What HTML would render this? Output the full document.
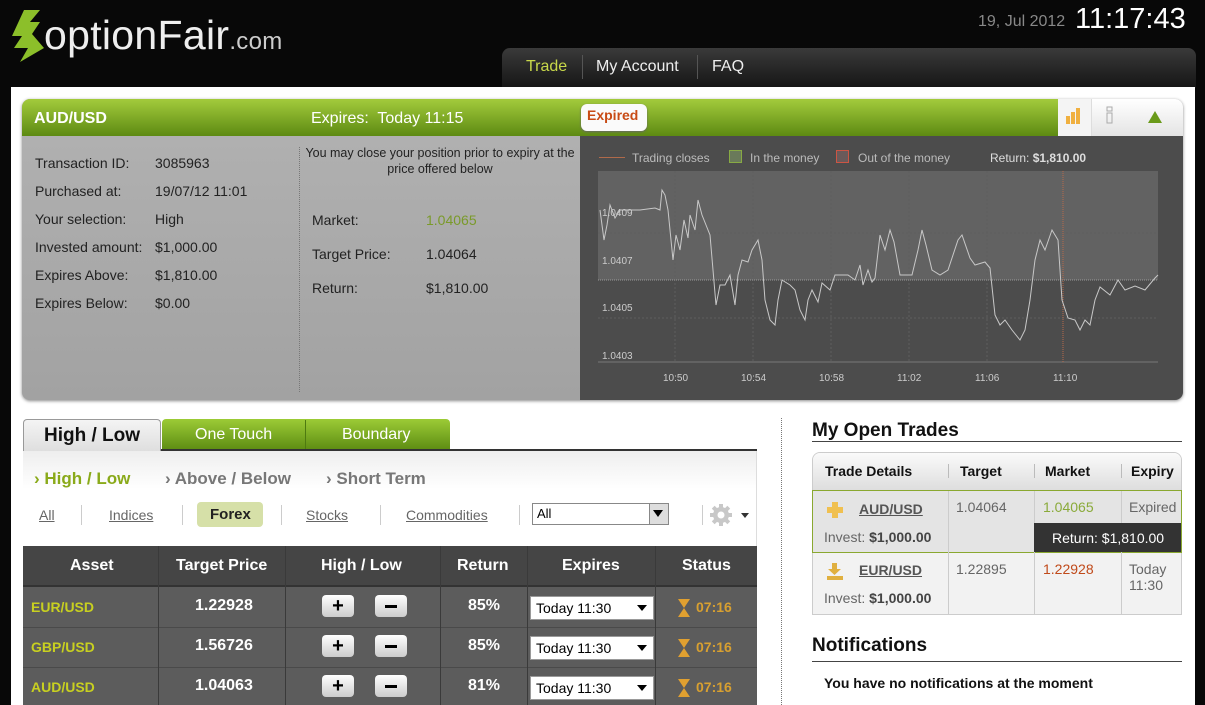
<!DOCTYPE html>
<html><head><meta charset="utf-8"><style>
*{box-sizing:border-box;margin:0;padding:0}
body{width:1205px;height:705px;overflow:hidden;background:#080808;font-family:"Liberation Sans",Arial,sans-serif;position:relative}
.a{position:absolute}
.t{position:absolute;white-space:nowrap}
</style></head><body>
<!-- header -->
<svg class="a" style="left:10px;top:8px" width="36" height="56" viewBox="0 0 36 56"><path d="M14 2 L30 2 L20 14 L30 14 L22 26 L34 40 L10 54 L18 40 L4 40 L12 28 L2 28 Z" fill="#8cbf2a"/></svg>
<div class="t" style="left:44px;top:12px;font-size:41px;color:#eee;letter-spacing:0.3px">optionFair<span style="font-size:24px;color:#ccc">.com</span></div>
<div class="t" style="left:978px;top:13px;font-size:16px;color:#888">19, Jul 2012</div>
<div class="t" style="left:1075px;top:3px;font-size:29px;color:#fff">11:17:43</div>
<div class="a" style="left:502px;top:48px;width:694px;height:40px;border-radius:8px 8px 0 0;background:linear-gradient(#3a3a3a,#151515)"></div>
<div class="t" style="left:526px;top:58px;font-size:16px;color:#c8d84a">Trade</div>
<div class="a" style="left:582px;top:55px;width:1px;height:24px;background:#555"></div>
<div class="t" style="left:596px;top:58px;font-size:16px;color:#eee">My Account</div>
<div class="a" style="left:697px;top:55px;width:1px;height:24px;background:#555"></div>
<div class="t" style="left:712px;top:58px;font-size:16px;color:#eee">FAQ</div>
<!-- content -->
<div class="a" style="left:11px;top:87px;width:1184px;height:618px;background:#fff"></div>
<!-- top panel -->
<div class="a" style="left:22px;top:99px;width:1161px;height:301px;border-radius:8px;background:#aaa;box-shadow:0 1px 3px #888;overflow:hidden">
 <div class="a" style="left:0;top:0;width:1036px;height:37px;background:linear-gradient(#a3cb3c,#5d8a12)"></div>
 <div class="a" style="left:1036px;top:0;width:125px;height:37px;background:linear-gradient(#fff,#e4e4e4)"></div>
 <div class="a" style="left:1036px;top:0;width:34px;height:37px;background:#f4f4f4;border-right:1px solid #ddd"></div>
 <div class="a" style="left:0;top:37px;width:558px;height:264px;background:linear-gradient(#b0b0b0,#a2a2a2)"></div>
 <div class="a" style="left:558px;top:37px;width:603px;height:264px;background:#4c4c4c"></div>
</div>
<div class="t" style="left:34px;top:110px;font-size:16px;font-weight:bold;color:#fff">AUD/USD</div>
<div class="t" style="left:311px;top:110px;font-size:16px;color:#fff">Expires:&nbsp; Today 11:15</div>
<div class="a" style="left:581px;top:104px;width:66px;height:27px;background:#fafafa;border-radius:6px;box-shadow:0 1px 2px #666"></div>
<div class="t" style="left:587px;top:107px;font-size:14px;font-weight:bold;color:#c84a14">Expired</div>
<svg class="a" style="left:1065px;top:106px" width="18" height="20"><rect x="1" y="10" width="4" height="8" fill="#f0b040"/><rect x="6" y="6" width="4" height="12" fill="#f0b040"/><rect x="11" y="2" width="4" height="16" fill="#f0b040"/></svg>
<svg class="a" style="left:1105px;top:106px" width="10" height="20"><rect x="2" y="1" width="5" height="4" fill="none" stroke="#aaa"/><rect x="2" y="7" width="5" height="10" fill="none" stroke="#aaa"/></svg>
<svg class="a" style="left:1148px;top:111px" width="14" height="12"><path d="M7 0 L14 12 L0 12Z" fill="#6a9a1a"/></svg>
<div class="a" style="left:299px;top:147px;height:245px;border-left:1px dotted #777"></div>
<div style="position:absolute;left:35px;top:149px;font-size:14px;color:#222;line-height:28px">
Transaction ID:<br>Purchased at:<br>Your selection:<br>Invested amount:<br>Expires Above:<br>Expires Below:</div>
<div style="position:absolute;left:155px;top:149px;font-size:14px;color:#222;line-height:28px">
3085963<br>19/07/12 11:01<br>High<br>$1,000.00<br>$1,810.00<br>$0.00</div>
<div class="t" style="left:302px;top:145px;width:276px;text-align:center;font-size:12.5px;color:#222;line-height:16px;white-space:normal">You may close your position prior to expiry at the price offered below</div>
<div style="position:absolute;left:312px;top:203px;font-size:14px;color:#222;line-height:34px">Market:<br>Target Price:<br>Return:</div>
<div style="position:absolute;left:426px;top:203px;font-size:14px;color:#222;line-height:34px"><span style="color:#7a9a2a">1.04065</span><br>1.04064<br>$1,810.00</div>
<!-- chart -->
<div class="a" style="left:599px;top:157px;width:26px;height:1px;background:#b06a4a"></div>
<div class="t" style="left:632px;top:151px;font-size:12px;color:#bbb">Trading closes</div>
<div class="a" style="left:729px;top:150px;width:13px;height:13px;background:#6a7a5a;border:1px solid #8a4"></div>
<div class="t" style="left:750px;top:151px;font-size:12px;color:#bbb">In the money</div>
<div class="a" style="left:836px;top:150px;width:13px;height:13px;background:#6a5a5a;border:1px solid #c54"></div>
<div class="t" style="left:858px;top:151px;font-size:12px;color:#bbb">Out of the money</div>
<div class="t" style="left:990px;top:151px;font-size:12px;color:#ddd">Return: <b>$1,810.00</b></div>
<div class="a" style="left:598px;top:171px;width:560px;height:109px;background:#626262"></div>
<svg class="a" style="left:0;top:0" width="1205" height="405">
<g stroke="#5e5e5e" stroke-dasharray="2,2" stroke-width="1"><line x1="675" y1="171" x2="675" y2="362"/><line x1="753" y1="171" x2="753" y2="362"/><line x1="831" y1="171" x2="831" y2="362"/><line x1="909" y1="171" x2="909" y2="362"/><line x1="987" y1="171" x2="987" y2="362"/><line x1="598" y1="233" x2="1158" y2="233"/><line x1="598" y1="318" x2="1158" y2="318"/></g>
<line x1="598" y1="280" x2="1158" y2="280" stroke="#999" stroke-width="1" stroke-dasharray="1,1"/>
<line x1="598" y1="362" x2="1158" y2="362" stroke="#777"/>
<line x1="1063" y1="171" x2="1063" y2="362" stroke="#b86a4a" stroke-dasharray="1,1"/>
<polyline fill="none" stroke="#c8c8c8" stroke-width="1" points="600,210 604,240 607,225 610,205 615,218 620,210 640,210 655,208 660,210 662,190 665,195 668,210 673,260 676,235 680,250 684,220 688,238 690,215 695,230 698,200 702,215 706,225 710,235 716,305 720,285 725,285 730,275 735,305 738,275 742,260 748,262 752,250 758,240 762,260 765,300 770,320 775,325 778,300 782,280 790,285 795,290 800,310 805,320 808,300 812,290 818,302 822,283 830,290 835,275 848,275 855,280 860,265 863,285 868,270 872,282 875,278 880,235 885,250 890,230 894,242 900,275 912,275 918,250 922,230 926,245 932,270 940,275 948,270 958,240 962,235 970,258 975,265 985,262 990,268 995,315 1000,325 1005,320 1012,330 1020,340 1025,330 1030,300 1035,260 1040,240 1045,250 1052,230 1058,240 1062,300 1068,318 1075,320 1080,330 1085,320 1090,325 1095,300 1100,287 1110,295 1118,280 1125,290 1135,286 1145,290 1155,278 1158,275"/>
<g font-size="10" fill="#ccc" font-family="Liberation Sans,sans-serif"><text x="602" y="216">1.0409</text><text x="602" y="264">1.0407</text><text x="602" y="311">1.0405</text><text x="602" y="359">1.0403</text>
<text x="663" y="381">10:50</text><text x="741" y="381">10:54</text><text x="819" y="381">10:58</text><text x="897" y="381">11:02</text><text x="975" y="381">11:06</text><text x="1053" y="381">11:10</text></g>
</svg>
<!-- tabs -->
<div class="a" style="left:23px;top:419px;width:138px;height:34px;background:linear-gradient(#f4f4f4,#ddd);border:1px solid #999;border-bottom:none;border-radius:4px 4px 0 0"></div>
<div class="t" style="left:44px;top:425px;font-size:19px;font-weight:bold;color:#111">High / Low</div>
<div class="a" style="left:162px;top:419px;width:288px;height:31px;background:linear-gradient(#9ccb36,#5d8c12);border-radius:4px 4px 0 0"></div>
<div class="a" style="left:305px;top:420px;width:1px;height:30px;background:#4e7a10"></div>
<div class="t" style="left:195px;top:426px;font-size:16px;color:#fff">One Touch</div>
<div class="t" style="left:342px;top:426px;font-size:16px;color:#fff">Boundary</div>
<div class="a" style="left:161px;top:449px;width:596px;height:2px;background:#333"></div>
<div class="a" style="left:23px;top:451px;width:734px;height:95px;background:linear-gradient(#eee,#fff 40%);border-right:1px solid #ddd"></div>
<div class="t" style="left:34px;top:469px;font-size:17px;font-weight:bold;color:#8aaa1a">› High / Low</div>
<div class="t" style="left:165px;top:469px;font-size:17px;font-weight:bold;color:#777">› Above / Below</div>
<div class="t" style="left:326px;top:469px;font-size:17px;font-weight:bold;color:#777">› Short Term</div>
<div class="t" style="left:39px;top:507px;font-size:14px;color:#666;text-decoration:underline">All</div>
<div class="t" style="left:109px;top:507px;font-size:14px;color:#666;text-decoration:underline">Indices</div>
<div class="a" style="left:197px;top:502px;width:66px;height:25px;background:#d6e0a8;border-radius:4px"></div>
<div class="t" style="left:210px;top:506px;font-size:15px;font-weight:bold;color:#222">Forex</div>
<div class="t" style="left:306px;top:507px;font-size:14px;color:#666;text-decoration:underline">Stocks</div>
<div class="t" style="left:406px;top:507px;font-size:14px;color:#666;text-decoration:underline">Commodities</div>
<div class="a" style="left:81px;top:505px;width:1px;height:20px;background:#ccc"></div>
<div class="a" style="left:182px;top:505px;width:1px;height:20px;background:#ccc"></div>
<div class="a" style="left:281px;top:505px;width:1px;height:20px;background:#ccc"></div>
<div class="a" style="left:380px;top:505px;width:1px;height:20px;background:#ccc"></div>
<div class="a" style="left:519px;top:505px;width:1px;height:20px;background:#ccc"></div>
<div class="a" style="left:702px;top:505px;width:1px;height:20px;background:#ccc"></div>
<div class="a" style="left:532px;top:503px;width:137px;height:22px;border:1px solid #888;background:#fff"></div>
<div class="t" style="left:537px;top:506px;font-size:13px;color:#000">All</div>
<div class="a" style="left:649px;top:504px;width:19px;height:20px;background:#ddd;border-left:1px solid #888"></div>
<svg class="a" style="left:653px;top:510px" width="10" height="8"><path d="M0 0 L10 0 L5 7Z" fill="#000"/></svg>
<svg class="a" style="left:710px;top:503px" width="40" height="24"><g fill="#c8c8c8"><circle cx="11" cy="12" r="8"/><rect x="9" y="1" width="4" height="22"/><rect x="0" y="10" width="22" height="4"/><rect x="9" y="1" width="4" height="22" transform="rotate(45 11 12)"/><rect x="9" y="1" width="4" height="22" transform="rotate(-45 11 12)"/></g><circle cx="11" cy="12" r="3.5" fill="#fff"/><path d="M31 10 L39 10 L35 15Z" fill="#333"/></svg>
<!-- table -->
<div class="a" style="left:23px;top:546px;width:734px;height:159px;background:#5c5c5c"></div>
<div class="a" style="left:23px;top:546px;width:734px;height:41px;background:#454545;border-bottom:2px solid #333"></div>
<div class="a" style="left:23px;top:627px;width:734px;height:1px;background:#4a4a4a"></div>
<div class="a" style="left:23px;top:667px;width:734px;height:1px;background:#4a4a4a"></div>
<div class="a" style="left:158px;top:546px;width:1px;height:159px;background:#3a3a3a"></div>
<div class="a" style="left:285px;top:546px;width:1px;height:159px;background:#3a3a3a"></div>
<div class="a" style="left:440px;top:546px;width:1px;height:159px;background:#3a3a3a"></div>
<div class="a" style="left:527px;top:546px;width:1px;height:159px;background:#3a3a3a"></div>
<div class="a" style="left:655px;top:546px;width:1px;height:159px;background:#3a3a3a"></div>
<div style="position:absolute;left:23px;top:557px;width:734px;font-size:16px;font-weight:bold;color:#fff">
<span class="t" style="left:47px">Asset</span><span class="t" style="left:153px">Target Price</span><span class="t" style="left:298px">High / Low</span><span class="t" style="left:434px">Return</span><span class="t" style="left:539px">Expires</span><span class="t" style="left:659px">Status</span></div>
<!-- rows -->
<div style="position:absolute;left:0;top:587px">
 <div class="t" style="left:31px;top:12px;font-size:14px;font-weight:bold;color:#c8d020">EUR/USD</div>
 <div class="t" style="left:195px;top:10px;font-size:16px;font-weight:bold;color:#fff">1.22928</div>
 <div class="a" style="left:322px;top:8px;width:32px;height:22px;border-radius:4px;background:linear-gradient(#fff,#ccc);font:bold 20px/22px 'Liberation Sans';text-align:center;color:#000">+</div>
 <div class="a" style="left:375px;top:8px;width:32px;height:22px;border-radius:4px;background:linear-gradient(#fff,#ccc)"><div class="a" style="left:10px;top:10px;width:12px;height:3px;background:#000"></div></div>
 <div class="t" style="left:468px;top:10px;font-size:16px;font-weight:bold;color:#fff">85%</div>
 <div class="a" style="left:530px;top:9px;width:124px;height:24px;background:#fff;border:1px solid #999"></div>
 <div class="t" style="left:536px;top:13px;font-size:14px;color:#000">Today 11:30</div>
 <svg class="a" style="left:637px;top:18px" width="10" height="7"><path d="M0 0 L10 0 L5 6Z" fill="#000"/></svg>
 <svg class="a" style="left:677px;top:11px" width="14" height="20"><path d="M1 1 H13 L7 10 L13 19 H1 L7 10Z" fill="#e0a030"/></svg>
 <div class="t" style="left:696px;top:12px;font-size:14px;font-weight:bold;color:#d8a030">07:16</div>
</div>
<div style="position:absolute;left:0;top:627px">
 <div class="t" style="left:31px;top:12px;font-size:14px;font-weight:bold;color:#c8d020">GBP/USD</div>
 <div class="t" style="left:195px;top:10px;font-size:16px;font-weight:bold;color:#fff">1.56726</div>
 <div class="a" style="left:322px;top:8px;width:32px;height:22px;border-radius:4px;background:linear-gradient(#fff,#ccc);font:bold 20px/22px 'Liberation Sans';text-align:center;color:#000">+</div>
 <div class="a" style="left:375px;top:8px;width:32px;height:22px;border-radius:4px;background:linear-gradient(#fff,#ccc)"><div class="a" style="left:10px;top:10px;width:12px;height:3px;background:#000"></div></div>
 <div class="t" style="left:468px;top:10px;font-size:16px;font-weight:bold;color:#fff">85%</div>
 <div class="a" style="left:530px;top:9px;width:124px;height:24px;background:#fff;border:1px solid #999"></div>
 <div class="t" style="left:536px;top:13px;font-size:14px;color:#000">Today 11:30</div>
 <svg class="a" style="left:637px;top:18px" width="10" height="7"><path d="M0 0 L10 0 L5 6Z" fill="#000"/></svg>
 <svg class="a" style="left:677px;top:11px" width="14" height="20"><path d="M1 1 H13 L7 10 L13 19 H1 L7 10Z" fill="#e0a030"/></svg>
 <div class="t" style="left:696px;top:12px;font-size:14px;font-weight:bold;color:#d8a030">07:16</div>
</div>
<div style="position:absolute;left:0;top:667px">
 <div class="t" style="left:31px;top:12px;font-size:14px;font-weight:bold;color:#c8d020">AUD/USD</div>
 <div class="t" style="left:195px;top:10px;font-size:16px;font-weight:bold;color:#fff">1.04063</div>
 <div class="a" style="left:322px;top:8px;width:32px;height:22px;border-radius:4px;background:linear-gradient(#fff,#ccc);font:bold 20px/22px 'Liberation Sans';text-align:center;color:#000">+</div>
 <div class="a" style="left:375px;top:8px;width:32px;height:22px;border-radius:4px;background:linear-gradient(#fff,#ccc)"><div class="a" style="left:10px;top:10px;width:12px;height:3px;background:#000"></div></div>
 <div class="t" style="left:468px;top:10px;font-size:16px;font-weight:bold;color:#fff">81%</div>
 <div class="a" style="left:530px;top:9px;width:124px;height:24px;background:#fff;border:1px solid #999"></div>
 <div class="t" style="left:536px;top:13px;font-size:14px;color:#000">Today 11:30</div>
 <svg class="a" style="left:637px;top:18px" width="10" height="7"><path d="M0 0 L10 0 L5 6Z" fill="#000"/></svg>
 <svg class="a" style="left:677px;top:11px" width="14" height="20"><path d="M1 1 H13 L7 10 L13 19 H1 L7 10Z" fill="#e0a030"/></svg>
 <div class="t" style="left:696px;top:12px;font-size:14px;font-weight:bold;color:#d8a030">07:16</div>
</div>
<div class="a" style="left:781px;top:418px;height:287px;border-left:1px dotted #777"></div>
<!-- right -->
<div class="t" style="left:812px;top:420px;font-size:19px;font-weight:bold;color:#111">My Open Trades</div>
<div class="a" style="left:812px;top:441px;width:370px;height:1px;background:#444"></div>
<div class="a" style="left:812px;top:452px;width:370px;height:163px;border:1px solid #ccc;border-radius:8px 8px 0 0;background:#f2f2f2;overflow:hidden">
 <div class="a" style="left:0;top:0;width:370px;height:38px;background:linear-gradient(#fafafa,#ddd)"></div>
</div>
<div class="t" style="left:825px;top:463px;font-size:14px;font-weight:bold;color:#111">Trade Details</div>
<div class="t" style="left:960px;top:463px;font-size:14px;font-weight:bold;color:#111">Target</div>
<div class="t" style="left:1045px;top:463px;font-size:14px;font-weight:bold;color:#111">Market</div>
<div class="t" style="left:1131px;top:463px;font-size:14px;font-weight:bold;color:#111">Expiry</div>
<div class="a" style="left:948px;top:464px;width:1px;height:14px;background:#bbb"></div>
<div class="a" style="left:1034px;top:464px;width:1px;height:14px;background:#bbb"></div>
<div class="a" style="left:1121px;top:464px;width:1px;height:14px;background:#bbb"></div>
<div class="a" style="left:812px;top:490px;width:370px;height:63px;background:#e4e4e4;border:1px solid #8aa830"></div>
<div class="a" style="left:948px;top:491px;width:1px;height:124px;background:#ccc"></div>
<div class="a" style="left:1034px;top:491px;width:1px;height:124px;background:#ccc"></div>
<div class="a" style="left:1121px;top:491px;width:1px;height:124px;background:#ccc"></div>
<div class="a" style="left:1034px;top:523px;width:147px;height:29px;background:#333"></div>
<div class="t" style="left:1052px;top:530px;font-size:14px;color:#fff">Return: $1,810.00</div>
<svg class="a" style="left:826px;top:501px" width="18" height="18"><path d="M6 1 H12 V6 H17 V12 H12 V17 H6 V12 H1 V6 H6Z" fill="#f0c050"/></svg>
<div class="t" style="left:859px;top:501px;font-size:14px;font-weight:bold;color:#555;text-decoration:underline">AUD/USD</div>
<div class="t" style="left:824px;top:529px;font-size:14px;color:#666">Invest: <b style="color:#444">$1,000.00</b></div>
<div class="t" style="left:956px;top:499px;font-size:14px;color:#666">1.04064</div>
<div class="t" style="left:1043px;top:499px;font-size:14px;color:#8aaa3a">1.04065</div>
<div class="t" style="left:1129px;top:499px;font-size:14px;color:#666">Expired</div>
<svg class="a" style="left:826px;top:562px" width="18" height="20"><path d="M6 1 H11 V7 H15 L8.5 13 L2 7 H6Z" fill="#e0b040"/><rect x="1" y="14" width="16" height="4" fill="#e0b040"/></svg>
<div class="t" style="left:859px;top:562px;font-size:14px;font-weight:bold;color:#555;text-decoration:underline">EUR/USD</div>
<div class="t" style="left:824px;top:590px;font-size:14px;color:#666">Invest: <b style="color:#444">$1,000.00</b></div>
<div class="t" style="left:956px;top:561px;font-size:14px;color:#666">1.22895</div>
<div class="t" style="left:1043px;top:561px;font-size:14px;color:#c04a1a">1.22928</div>
<div class="t" style="left:1129px;top:561px;font-size:14px;color:#666;line-height:16px">Today<br>11:30</div>
<div class="t" style="left:812px;top:635px;font-size:19px;font-weight:bold;color:#111">Notifications</div>
<div class="a" style="left:812px;top:661px;width:370px;height:1px;background:#444"></div>
<div class="t" style="left:824px;top:675px;font-size:14px;font-weight:bold;color:#111">You have no notifications at the moment</div>
</body></html>
